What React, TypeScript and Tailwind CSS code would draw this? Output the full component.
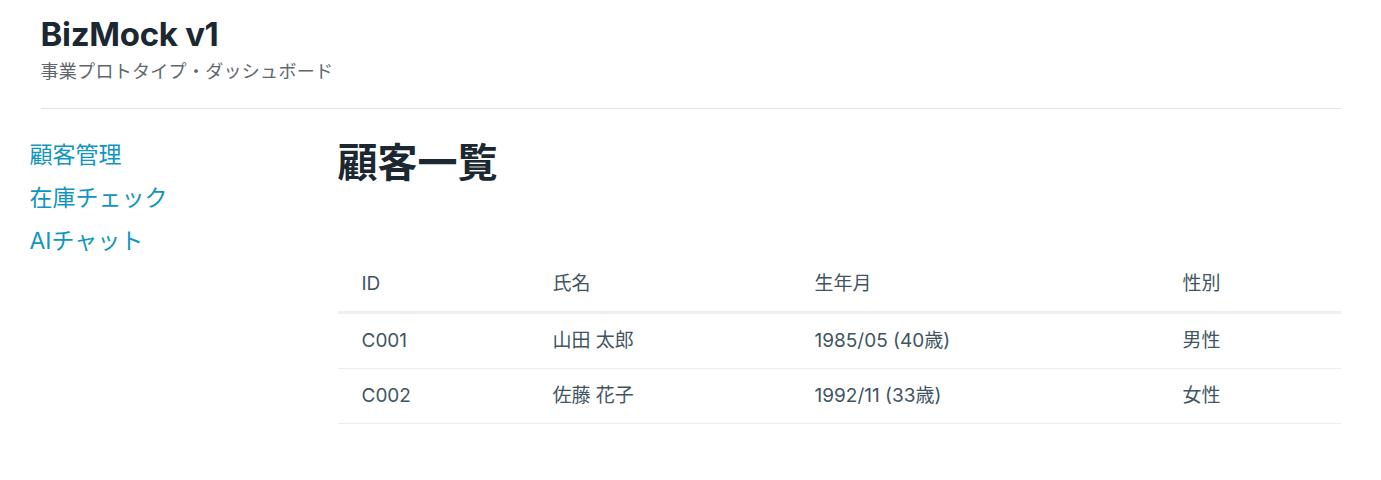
const customers = [
  { id: 'C001', name: '山田 太郎', birth: '1985/05 (40歳)', gender: '男性' },
  { id: 'C002', name: '佐藤 花子', birth: '1992/11 (33歳)', gender: '女性' },
]

const nav = ['顧客管理', '在庫チェック', 'AIチャット']

export default function App() {
  return (
    <div className="min-h-[480px] bg-white font-['Inter','Noto_Sans_CJK_JP',sans-serif] text-[#415462]">
      <div className="mx-auto w-[1300px]">
        <header className="border-b border-[#e3e3e3] pt-[14px] pb-[24px]">
          <h1 className="text-[33px] leading-[40px] font-bold tracking-[-0.3px] text-[#1b2832]">BizMock v1</h1>
          <p className="mt-[6px] text-[18px] leading-[24px] tracking-[0.3px] text-[#5d666d]">事業プロトタイプ・ダッシュボード</p>
        </header>

        <div className="flex">
          <aside className="w-[308px] shrink-0 -ml-[11px] pt-[31px]">
            <ul className="flex flex-col gap-[13px]">
              {nav.map(n => (
                <li key={n}>
                  <a href="#" className="text-[23px] leading-[30px] text-[#1095c1]">{n}</a>
                </li>
              ))}
            </ul>
          </aside>

          <main className="flex-1 pt-[30px]">
            <h2 className="text-[40px] leading-[48px] font-bold text-[#1b2832]">顧客一覧</h2>
            <table className="mt-[70px] w-full border-collapse text-[19px]">
              <thead>
                <tr className="border-b-[3px] border-[#edf0f3]">
                  <th className="w-[191px] px-[24px] py-[12px] text-left font-normal leading-[30px]">ID</th>
                  <th className="w-[262px] px-[24px] py-[12px] text-left font-normal leading-[30px]">氏名</th>
                  <th className="w-[368px] px-[24px] py-[12px] text-left font-normal leading-[30px]">生年月</th>
                  <th className="px-[24px] py-[12px] text-left font-normal leading-[30px]">性別</th>
                </tr>
              </thead>
              <tbody>
                {customers.map(c => (
                  <tr key={c.id} className="border-b border-[#e8edf1]">
                    <td className="px-[24px] py-[12px] leading-[30px]">{c.id}</td>
                    <td className="px-[24px] py-[12px] leading-[30px]">{c.name}</td>
                    <td className="px-[24px] py-[12px] leading-[30px]">{c.birth}</td>
                    <td className="px-[24px] py-[12px] leading-[30px]">{c.gender}</td>
                  </tr>
                ))}
              </tbody>
            </table>
          </main>
        </div>
      </div>
    </div>
  )
}
